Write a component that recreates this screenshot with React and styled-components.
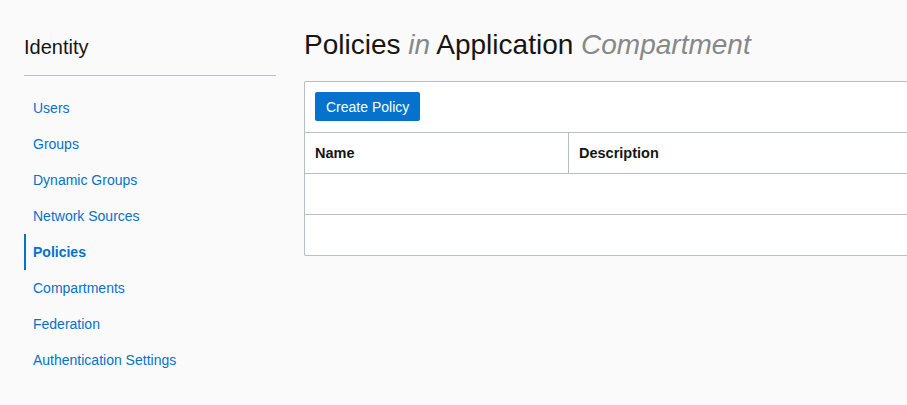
import React from 'react';
import styled, { createGlobalStyle } from 'styled-components';

const GlobalStyle = createGlobalStyle`
  html, body {
    margin: 0;
    padding: 0;
    background: #fafafa;
    font-family: "Liberation Sans", Arial, sans-serif;
    overflow: hidden;
  }
`;

const Page = styled.div`
  display: flex;
  gap: 28px;
  padding: 0 0 0 24px;
  min-height: 405px;
  background: #fafafa;
`;

const Sidebar = styled.aside`
  flex: 0 0 252px;
  padding-top: 33px;
`;

const SideTitle = styled.h2`
  margin: 0;
  font-size: 20px;
  line-height: 28px;
  font-weight: normal;
  color: #161513;
`;

const Rule = styled.hr`
  margin: 14px 0 0;
  border: 0;
  border-top: 1px solid #bcbcc6;
`;

const Nav = styled.nav`
  display: flex;
  flex-direction: column;
  margin-top: 14px;
`;

const NavLink = styled.a`
  display: block;
  height: 36px;
  line-height: 36px;
  padding-left: 7px;
  font-size: 14px;
  color: #0572ce;
  text-decoration: none;
  font-weight: ${p => (p.$active ? 'bold' : 'normal')};
  border-left: 2px solid ${p => (p.$active ? '#0572ce' : 'transparent')};
`;

const Main = styled.main`
  flex: 1;
  min-width: 0;
  padding-top: 27px;
`;

const Title = styled.h1`
  margin: 0 0 18px;
  font-size: 28px;
  line-height: 36px;
  font-weight: normal;
  color: #161513;
  white-space: nowrap;
`;

const Muted = styled.em`
  color: #888888;
`;

const Panel = styled.div`
  background: #fff;
  border: 1px solid #b9bdc4;
  border-right: 0;
  border-radius: 2px 0 0 2px;
`;

const Toolbar = styled.div`
  display: flex;
  align-items: center;
  padding: 10px 10px 11px;
  border-bottom: 1px solid #b9bdc4;
`;

const Button = styled.button`
  height: 29px;
  padding: 0 11px;
  border: 0;
  border-radius: 2px;
  background: #0572ce;
  color: #fff;
  font-family: "Liberation Sans", Arial, sans-serif;
  font-size: 14px;
`;

const Row = styled.div`
  display: grid;
  grid-template-columns: 263px 1fr;
  height: 40px;
  border-bottom: ${p => (p.$last ? '0' : '1px solid #b9bdc4')};
`;

const HeadCell = styled.div`
  display: flex;
  align-items: center;
  padding: 0 10px;
  font-size: 14.5px;
  font-weight: bold;
  color: #161513;
  & + & {
    border-left: 1px solid #b9bdc4;
  }
`;

const navItems = [
  'Users',
  'Groups',
  'Dynamic Groups',
  'Network Sources',
  'Policies',
  'Compartments',
  'Federation',
  'Authentication Settings',
];

export default function App() {
  return (
    <>
      <GlobalStyle />
      <Page>
        <Sidebar>
          <SideTitle>Identity</SideTitle>
          <Rule />
          <Nav>
            {navItems.map(item => (
              <NavLink key={item} href="#" $active={item === 'Policies'}>
                {item}
              </NavLink>
            ))}
          </Nav>
        </Sidebar>
        <Main>
          <Title>
            Policies <Muted>in</Muted> Application <Muted>Compartment</Muted>
          </Title>
          <Panel>
            <Toolbar>
              <Button>Create Policy</Button>
            </Toolbar>
            <Row>
              <HeadCell>Name</HeadCell>
              <HeadCell>Description</HeadCell>
            </Row>
            <Row />
            <Row $last />
          </Panel>
        </Main>
      </Page>
    </>
  );
}
